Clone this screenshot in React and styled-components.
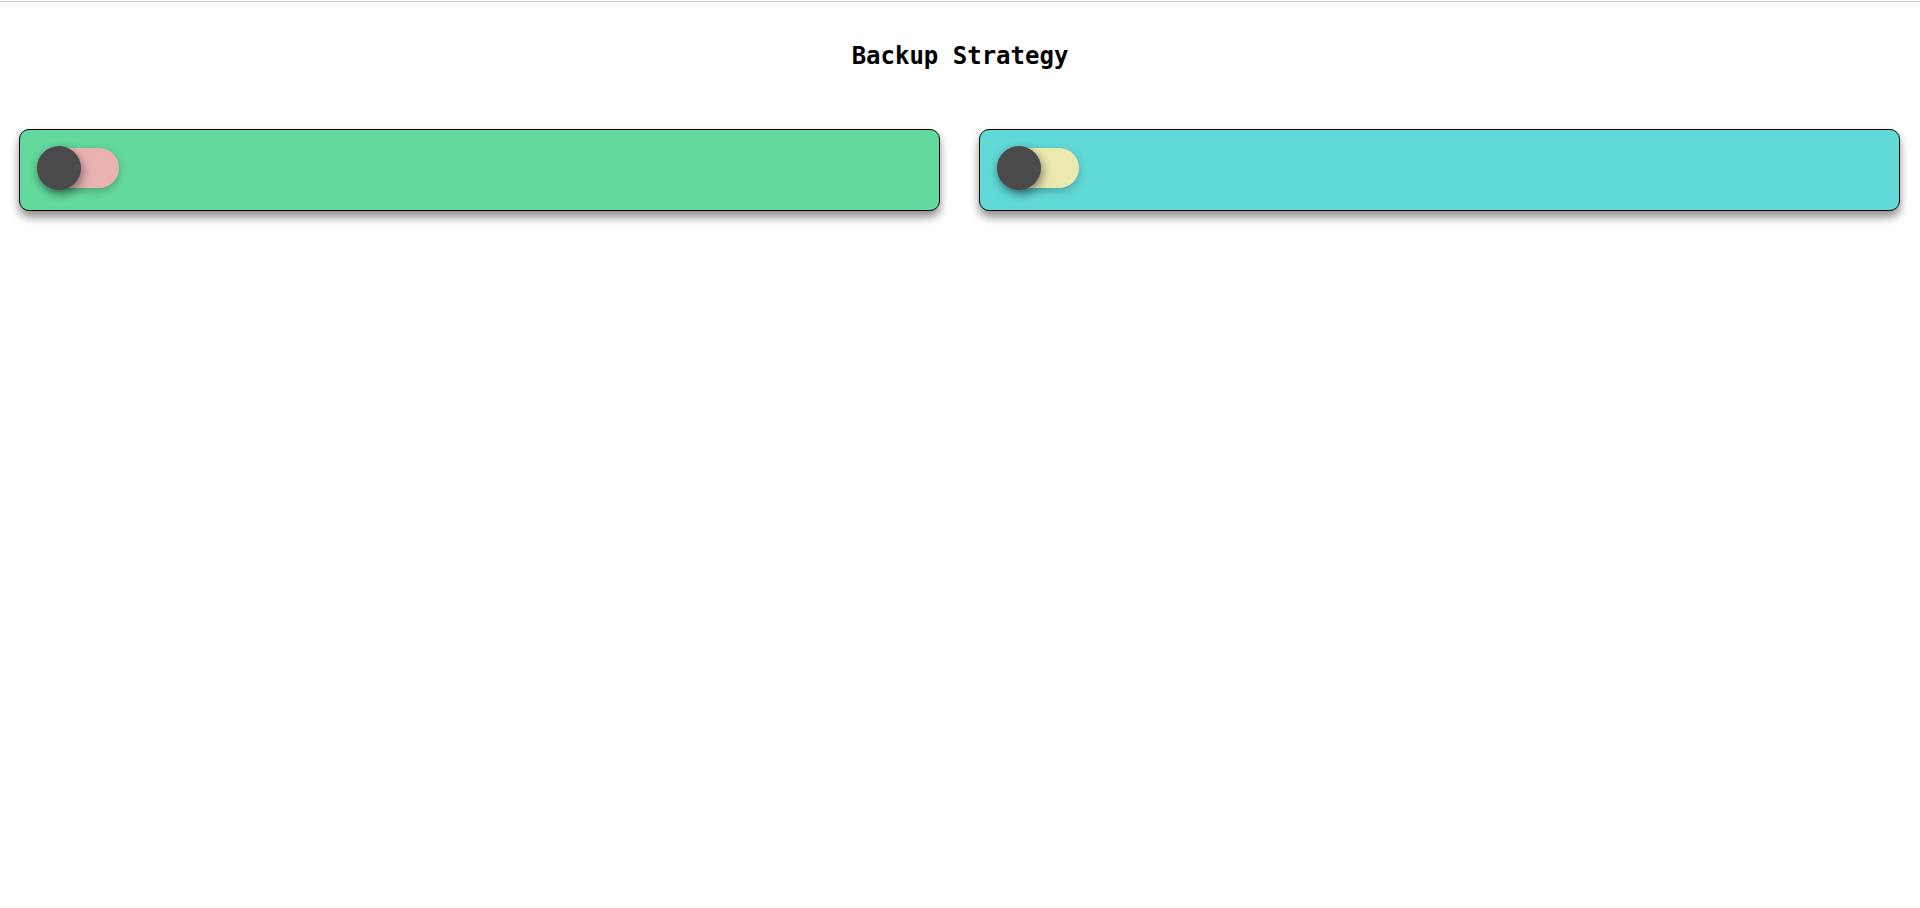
import React, { useState } from 'react';
import styled, { createGlobalStyle } from 'styled-components';

const GlobalStyle = createGlobalStyle`
  body {
    margin: 0;
    background: #fff;
    font-family: "DejaVu Sans Mono", "Liberation Mono", monospace;
  }
`;

const Page = styled.div`
  min-height: 100vh;
  padding-top: 1px;
  box-sizing: border-box;
`;

const TopRule = styled.div`
  height: 1px;
  background: #c8c8c8;
`;

const Title = styled.h2`
  margin: 39px 0 0;
  font-size: 24px;
  line-height: 30px;
  font-weight: bold;
  text-align: center;
  color: #000;
`;

const Grid = styled.div`
  display: grid;
  grid-template-columns: 1fr 1fr;
  gap: 39px;
  padding: 0 20px 40px 19px;
  margin-top: 58px;
`;

const Card = styled.div`
  box-sizing: border-box;
  height: 82px;
  padding: 18px 17px;
  display: flex;
  align-items: flex-start;
  background: ${(p) => p.$bg};
  border: 1px solid #000;
  border-radius: 10px;
  box-shadow: 0 6px 10px rgba(0, 0, 0, 0.45);
`;

const Track = styled.button`
  position: relative;
  width: 80px;
  height: 40px;
  margin-left: 2px;
  padding: 0;
  border: none;
  border-radius: 20px;
  background: ${(p) => p.$color};
  box-shadow: 0 3px 8px rgba(0, 0, 0, 0.25);
  cursor: pointer;
`;

const Knob = styled.span`
  position: absolute;
  top: -2px;
  left: ${(p) => (p.$on ? '38px' : '-2px')};
  width: 44px;
  height: 44px;
  border-radius: 50%;
  background: #4a4a4a;
  box-shadow: 2px 4px 10px rgba(0, 0, 0, 0.42);
  transition: left 0.2s;
`;

function Toggle({ color }) {
  const [on, setOn] = useState(false);
  return (
    <Track $color={color} onClick={() => setOn(!on)}>
      <Knob $on={on} />
    </Track>
  );
}

export default function App() {
  return (
    <Page>
      <GlobalStyle />
      <TopRule />
      <Title>Backup Strategy</Title>
      <Grid>
        <Card $bg="#63d99e">
          <Toggle color="#e9b3b3" />
        </Card>
        <Card $bg="#61d9d8">
          <Toggle color="#ebe8b0" />
        </Card>
      </Grid>
    </Page>
  );
}
